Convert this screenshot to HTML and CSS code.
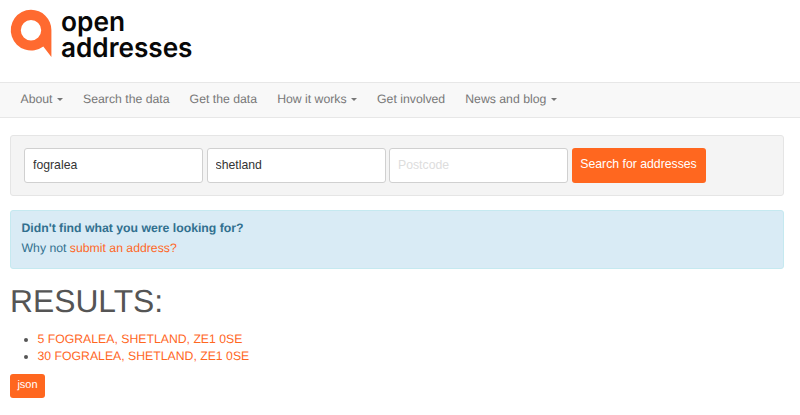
FILE: index.html
```html
<!DOCTYPE html>
<html lang="en">
<head>
<meta charset="utf-8">
<title>Open Addresses</title>
<link rel="stylesheet" href="styles.css">
</head>
<body>
<header class="masthead">
  <svg class="logo" width="200" height="70" viewBox="0 0 200 70" role="img" aria-label="open addresses">
    <path class="mark" fill-rule="evenodd" d="M31 9.7A20.4 20.4 0 0 1 51.4 30V57L43.3 46.5A20.4 20.4 0 1 1 31 9.7ZM31 20a10.2 10.2 0 1 0 0 20.4a10.2 10.2 0 0 0 0-20.4Z"/>
    <text class="wordmark" x="61" y="31" textLength="64" lengthAdjust="spacingAndGlyphs">open</text>
    <text class="wordmark" x="61" y="57" textLength="131.5" lengthAdjust="spacingAndGlyphs">addresses</text>
  </svg>
</header>
<nav class="navbar">
  <a class="about">About <i class="caret"></i></a>
  <a class="search">Search the data</a>
  <a class="get">Get the data</a>
  <a class="how">How it works <i class="caret"></i></a>
  <a class="involved">Get involved</a>
  <a class="news">News and blog <i class="caret"></i></a>
</nav>
<main class="content">
  <form class="well">
    <input type="text" value="fogralea" aria-label="Street">
    <input type="text" value="shetland" aria-label="Town">
    <input type="text" placeholder="Postcode" aria-label="Postcode">
    <button type="button" class="btn">Search for addresses</button>
  </form>
  <section class="alert">
    <strong>Didn't find what you were looking for?</strong>
    <p>Why not <a class="link">submit an address?</a></p>
  </section>
  <h1>RESULTS:</h1>
  <ul class="results">
    <li><a class="link">5 FOGRALEA, SHETLAND, ZE1 0SE</a></li>
    <li><a class="link">30 FOGRALEA, SHETLAND, ZE1 0SE</a></li>
  </ul>
  <a class="btn json">json</a>
</main>
</body>
</html>
```
FILE: styles.css
```css
* { box-sizing: border-box; }
body {
  margin: 0;
  background: #fff;
  color: #555;
  font: 12.25px/17px "Liberation Sans", Arial, sans-serif;
  text-rendering: geometricPrecision;
}
.masthead { height: 82px; }
.logo { display: block; }
.mark { fill: #ff6a30; }
.wordmark { font: 600 27px Inter, sans-serif; fill: #080808; }
.navbar {
  display: flex;
  gap: 20.1px;
  height: 36px;
  padding: 0 20.5px;
  background: #f8f8f8;
  border-top: 1px solid #e7e7e7;
  border-bottom: 1px solid #e7e7e7;
  color: #777;
  line-height: 33px;
  white-space: nowrap;
}
.caret {
  display: inline-block;
  margin-left: 1px;
  border: 3px solid transparent;
  border-top-color: #777;
  border-bottom: 0;
  vertical-align: 2px;
}
.content { padding: 17px 16px 0 10px; }
.well {
  display: flex;
  gap: 3.5px;
  height: 61px;
  padding: 12px 13px;
  background: #f4f4f4;
  border: 1px solid #e5e5e5;
  border-radius: 3px;
}
.well input {
  width: 179px;
  height: 35px;
  padding: 0 8px 2px;
  background: #fff;
  border: 1px solid #d0d0d0;
  border-radius: 3px;
  color: #333;
  font: inherit;
}
.well input::placeholder { color: #ddd; opacity: 1; }
.btn {
  height: 35px;
  padding: 0 0 2px;
  width: 134px;
  border: 0;
  border-radius: 3px;
  background: #ff671f;
  color: #fff;
  font: inherit;
  white-space: nowrap;
}
.alert {
  height: 59px;
  margin-top: 14px;
  padding: 7px 10.5px;
  background: #d9ebf5;
  border: 1px solid #c5e9f0;
  border-radius: 3px;
  color: #31708f;
  line-height: 20px;
}
.alert strong { display: block; }
.alert p { margin: 0; }
.link { color: #ff671f; }
h1 {
  margin: 14px 0 12px;
  font-size: 31.8px;
  font-weight: 400;
  line-height: 36px;
}
.results { margin: 0 0 9px; padding-left: 27.5px; }
.json {
  display: block;
  width: 35px;
  height: 24px;
  padding: 0;
  font-size: 11px;
  line-height: 23px;
  text-align: center;
}
```
